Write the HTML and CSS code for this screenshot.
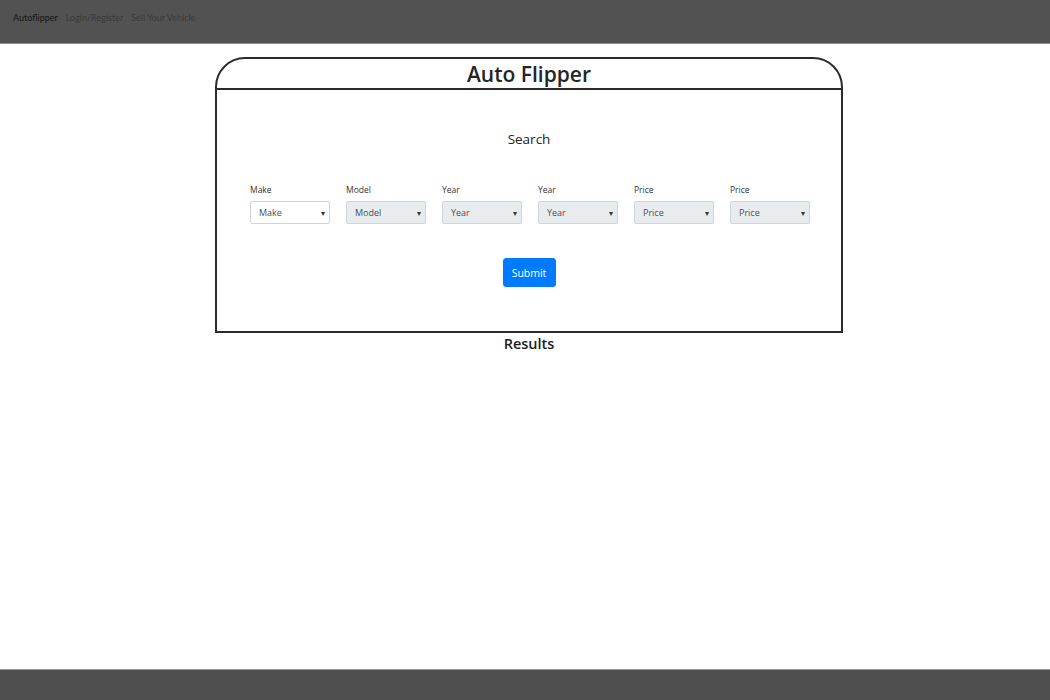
FILE: index.html
```html
<!DOCTYPE html>
<html>
<head>
<meta charset="utf-8">
<title>Auto Flipper</title>
<link rel="stylesheet" href="styles.css">
</head>
<body>
<div class="page">
  <nav class="navbar">
    <span class="brand">Autoflipper</span>
    <span class="nav-link">Login/Register</span>
    <span class="nav-link">Sell Your Vehicle</span>
  </nav>
  <main class="main">
    <div class="card">
      <div class="card-head">Auto Flipper</div>
      <div class="card-body">
        <div class="search-title">Search</div>
        <div class="fields">
          <div class="field"><div class="label">Make</div><div class="select">Make<span class="caret">▾</span></div></div>
          <div class="field"><div class="label">Model</div><div class="select disabled">Model<span class="caret">▾</span></div></div>
          <div class="field"><div class="label">Year</div><div class="select disabled">Year<span class="caret">▾</span></div></div>
          <div class="field"><div class="label">Year</div><div class="select disabled">Year<span class="caret">▾</span></div></div>
          <div class="field"><div class="label">Price</div><div class="select disabled">Price<span class="caret">▾</span></div></div>
          <div class="field"><div class="label">Price</div><div class="select disabled">Price<span class="caret">▾</span></div></div>
        </div>
        <div class="actions"><button class="btn">Submit</button></div>
      </div>
    </div>
    <div class="results">Results</div>
  </main>
  <footer class="footer"></footer>
</div>
</body>
</html>
```
FILE: styles.css
```css
html, body { margin: 0; padding: 0; height: 100%; }
body { font-family: "Open Sans", "Noto Sans", sans-serif; color: #212529; background: #fff; }
.page { display: flex; flex-direction: column; min-height: 100vh; }
.navbar {
  height: 31px; background: #525252; border-bottom: 1px solid #8a8a8a;
  display: flex; align-items: flex-start; gap: 8px; padding: 12px 13px 0;
  font-family: Lato, sans-serif; font-size: 9px;
}
.brand { color: #161616; }
.nav-link { color: #3a3a3a; }
.main { flex: 1; display: flex; flex-direction: column; align-items: center; padding-top: 13px; padding-left: 8px; }
.card { width: 628px; box-sizing: border-box; }
.card-head {
  height: 33px; box-sizing: border-box; border: 2px solid #2b2b2b;
  border-radius: 30px 30px 0 0; text-align: center; font-size: 21px; line-height: 31px; font-weight: 600;
  color: #252525;
}
.card-body {
  border: 2px solid #2b2b2b; border-top: none; height: 243px; box-sizing: border-box;
  display: flex; flex-direction: column; align-items: center;
}
.search-title { font-size: 13.5px; margin-top: 40px; color: #222; }
.fields { display: flex; gap: 16px; margin-top: 36px; padding-left: 2px; }
.field { width: 80px; }
.label { font-size: 8.5px; color: #333; margin-bottom: 5px; line-height: 12px; }
.select {
  height: 23px; box-sizing: border-box; border: 1px solid #ced4da; border-radius: 2px;
  background: #fff; font-size: 9px; color: #495057; padding-left: 8px; line-height: 21px;
  position: relative;
}
.select.disabled { background: #e9ecef; }
.caret { position: absolute; right: 4px; top: 0; font-size: 8px; color: #333; }
.actions { margin-top: 34px; }
.btn {
  background: #007bff; color: #fff; border: 1px solid #007bff; border-radius: 3px;
  font-family: "Open Sans", sans-serif; font-size: 10.5px; width: 53px; height: 29px; padding: 0;
}
.results { font-size: 14.5px; font-weight: 600; margin-top: 1px; color: #1c1c1c; }
.footer { height: 30px; background: #4f4f4f; border-top: 1px solid #9a9a9a; }
```
